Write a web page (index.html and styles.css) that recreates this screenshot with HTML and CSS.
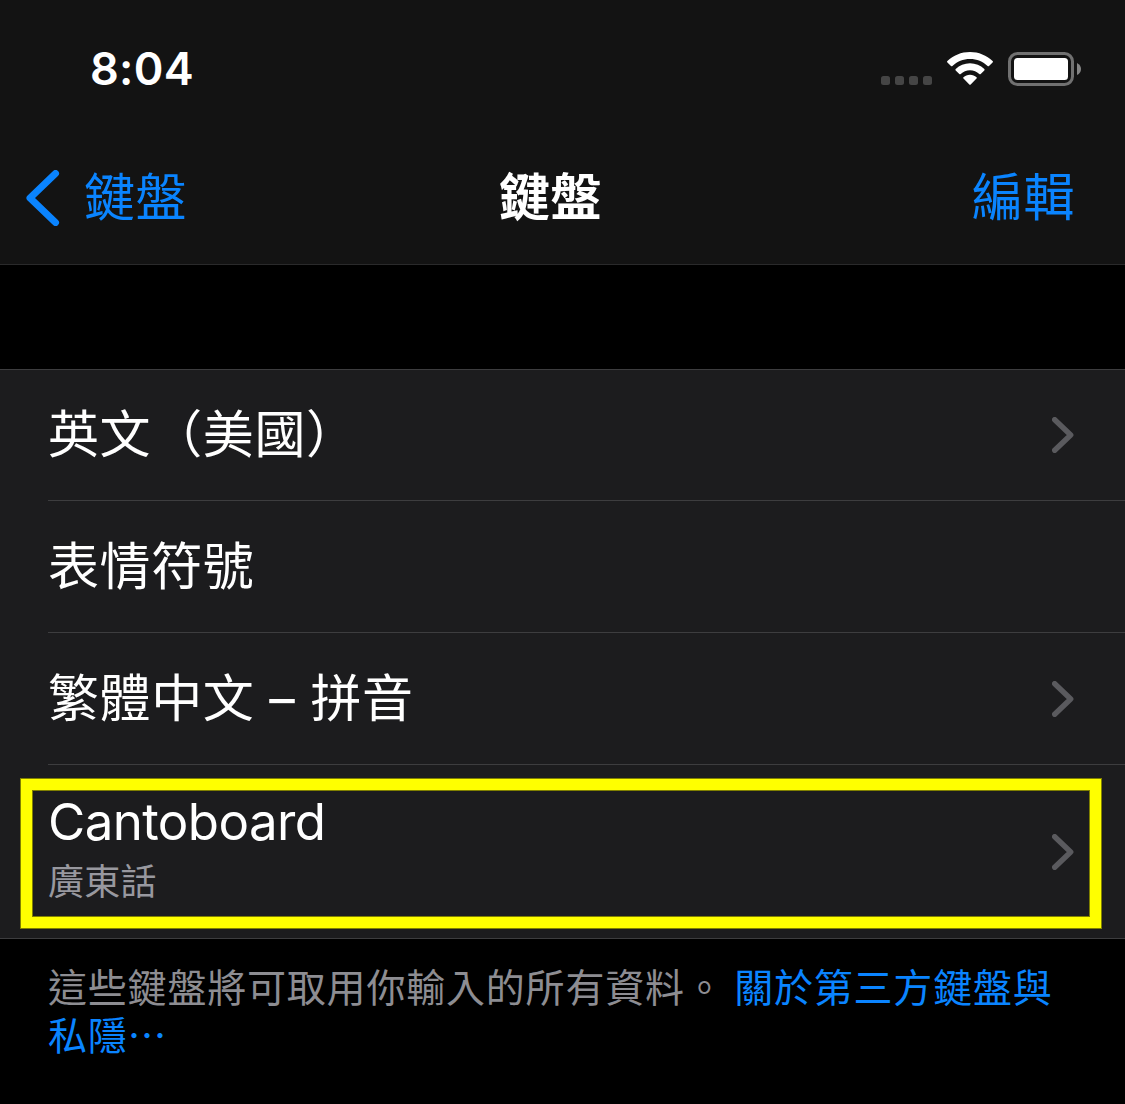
FILE: index.html
```html
<!DOCTYPE html>
<html lang="zh-Hant">
<head>
<meta charset="utf-8">
<title>鍵盤</title>
<link rel="stylesheet" href="styles.css">
</head>
<body>
<header class="header">
  <div class="status">
    <span class="time">8:04</span>
    <div class="indicators">
      <svg class="cell" width="52" height="9" viewBox="0 0 52 9"><rect width="9" height="9" rx="2.5"/><rect x="14" width="9" height="9" rx="2.5"/><rect x="28" width="9" height="9" rx="2.5"/><rect x="42" width="9" height="9" rx="2.5"/></svg>
      <svg class="wifi" width="46" height="33" viewBox="0 0 46 33"><path d="M23 0C14.300 0 6.300 3.400 .4 9Q-.3 9.700 .4 10.400L4 14Q4.700 14.700 5.400 14C10 9.600 16.200 7 23 7S36 9.600 40.600 14Q41.300 14.700 42 14L45.600 10.400Q46.300 9.700 45.600 9C39.700 3.400 31.700 0 23 0Z"/><path d="M23 11.300C17.500 11.300 12.500 13.400 8.700 17Q8 17.700 8.700 18.400L12.300 22Q13 22.700 13.700 22C16.200 19.700 19.400 18.300 23 18.300S29.800 19.700 32.300 22Q33 22.700 33.700 22L37.300 18.400Q38 17.700 37.300 17C33.500 13.400 28.500 11.300 23 11.300Z"/><path d="M23 22.800C20.400 22.800 18.200 23.700 16.500 25.200Q15.800 25.900 16.500 26.600L22.300 32.400Q23 33.100 23.700 32.400L29.500 26.600Q30.200 25.900 29.500 25.200C27.800 23.700 25.600 22.800 23 22.800Z"/></svg>
      <svg class="battery" width="74" height="34" viewBox="0 0 74 34"><rect class="shell" x="1.500" y="1.500" width="63" height="31" rx="8"/><rect class="charge" x="6" y="6" width="54" height="22" rx="3.500"/><path class="cap" d="M69 11Q73 13 73 17T69 23Z"/></svg>
    </div>
  </div>
  <nav class="nav">
    <a class="back"><svg width="34" height="56" viewBox="0 0 34 56"><path d="M29.500 3.500L4 28L29.500 52.500"/></svg><span>鍵盤</span></a>
    <h1 class="title">鍵盤</h1>
    <a class="edit">編輯</a>
  </nav>
</header>
<main>
  <ul class="list">
    <li class="row"><span>英文（美國）</span><svg class="chevron" width="22" height="36" viewBox="0 0 22 36"><path d="M2.700 2.700L18.700 18L2.700 33.300"/></svg></li>
    <li class="row"><span>表情符號</span></li>
    <li class="row"><span>繁體中文 – 拼音</span><svg class="chevron" width="22" height="36" viewBox="0 0 22 36"><path d="M2.700 2.700L18.700 18L2.700 33.300"/></svg></li>
    <li class="row row-tall">
      <div class="labels"><span class="name">Cantoboard</span><span class="detail">廣東話</span></div>
      <svg class="chevron" width="22" height="36" viewBox="0 0 22 36"><path d="M2.700 2.700L18.700 18L2.700 33.300"/></svg>
      <div class="highlight"></div>
    </li>
  </ul>
  <p class="note">這些鍵盤將可取用你輸入的所有資料。 <a class="link">關於第三方鍵盤與私隱…</a></p>
</main>
</body>
</html>
```
FILE: styles.css
```css
* { box-sizing: border-box; }
body {
  margin: 0;
  height: 1104px;
  overflow: hidden;
  background: #000;
  color: #fff;
  font: 51px/60px Inter, "Noto Sans CJK TC", sans-serif;
  letter-spacing: .6px;
}
.header {
  height: 265px;
  background: #131313;
  border-bottom: 1px solid #2a2a2b;
}
.status {
  height: 132px;
  padding: 39px 43px 0 90px;
  display: flex;
  justify-content: space-between;
  align-items: flex-start;
}
.time { font-size: 45px; font-weight: 600; letter-spacing: .3px; }
.indicators { display: flex; align-items: flex-start; padding-top: 13px; }
.cell { fill: #454545; margin: 24px 14px 0 0; }
.wifi { fill: #fff; margin-right: 15px; }
.shell { fill: none; stroke: #717171; stroke-width: 3; }
.charge { fill: #fff; }
.cap { fill: #858585; }
.nav {
  height: 132px;
  padding: 0 50px 0 26px;
  display: grid;
  grid-template-columns: 1fr auto 1fr;
  align-items: center;
}
.back { display: flex; align-items: center; gap: 24px; color: #0a84ff; }
.back path { fill: none; stroke: #0a84ff; stroke-width: 7; stroke-linecap: round; stroke-linejoin: round; }
.title { margin: 0; font-size: 51px; font-weight: 600; }
.edit { justify-self: end; color: #0a84ff; }
.list {
  list-style: none;
  margin: 104px 0 0;
  padding: 0 0 0 48px;
  background: #1c1c1e;
  border-top: 1px solid #3d3d3f;
  border-bottom: 1px solid #3d3d3f;
}
.row {
  height: 132px;
  padding-right: 51px;
  display: flex;
  justify-content: space-between;
  align-items: center;
  border-bottom: 1px solid #3d3d3f;
}
.row:first-child { height: 131px; }
.row-tall { height: 173px; border-bottom: 0; position: relative; }
.chevron path { fill: none; stroke: #5a5a5e; stroke-width: 5.4; stroke-linecap: round; stroke-linejoin: round; }
.labels { display: flex; flex-direction: column; }
.name { letter-spacing: -.6px; }
.detail { font-size: 36px; line-height: 60px; color: #98989f; letter-spacing: .3px; }
.highlight {
  position: absolute;
  left: -28px;
  top: 13px;
  width: 1082px;
  height: 151px;
  border: 12px solid #ff0;
  box-shadow: inset 0 0 0 1px #808000;
  outline: 1px solid #808000;
  outline-offset: -1px;
}
.note {
  margin: 22px 48px 0;
  font-size: 39px;
  line-height: 48px;
  letter-spacing: .8px;
  color: #8d8d92;
  font-family: "Noto Sans CJK TC", sans-serif;
}
.link { color: #0a84ff; }
```
